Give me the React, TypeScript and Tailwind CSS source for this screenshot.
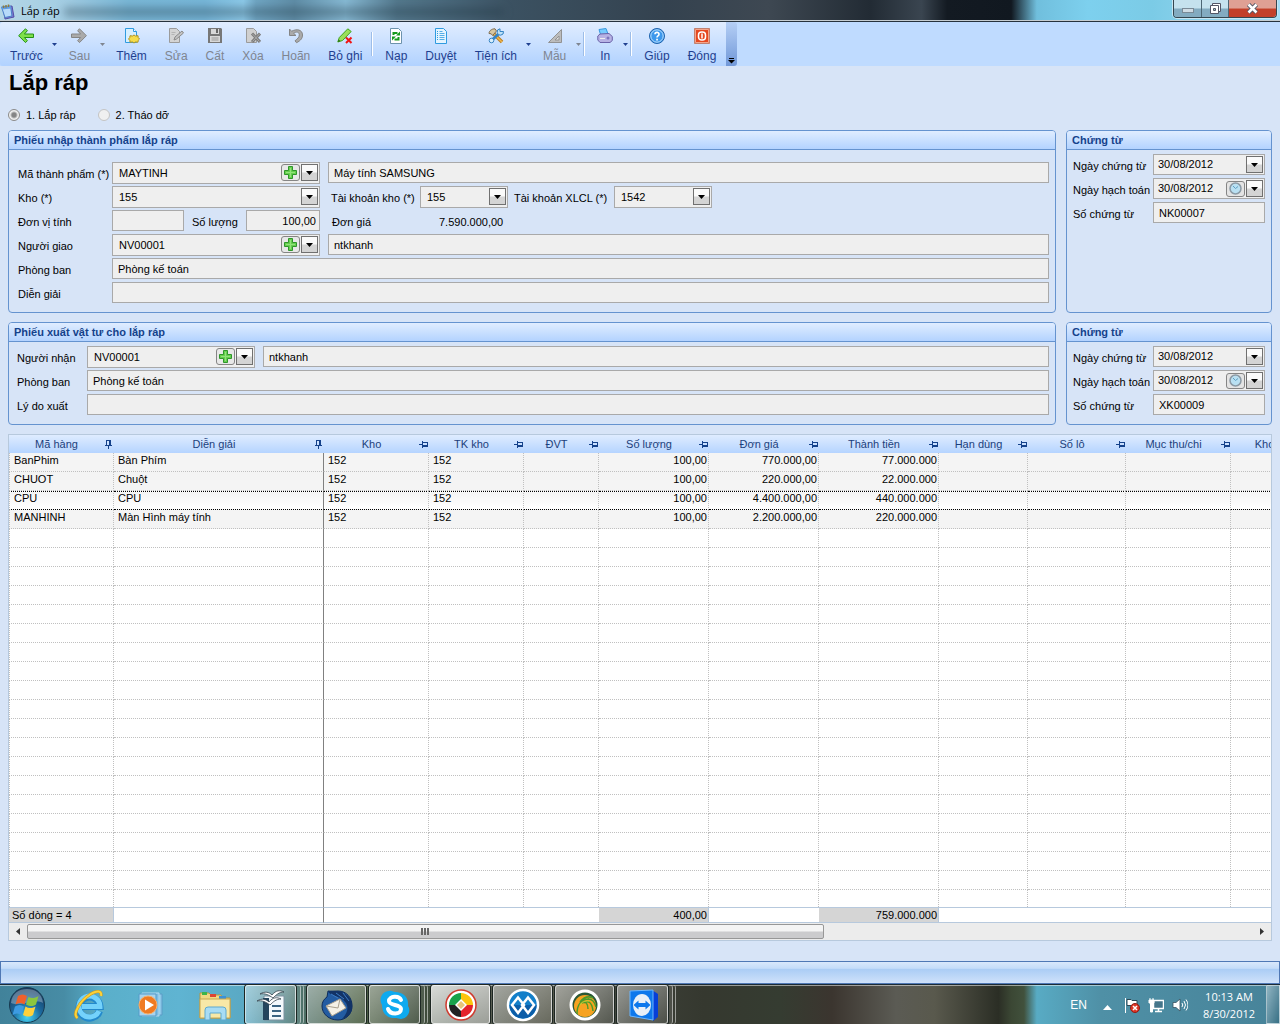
import React, { useState } from 'react';

interface Column {
  title: string;
  width: string;
  align?: 'right';
  pinned?: boolean;
}

interface ToolItem {
  label: string;
  icon: React.ReactNode;
  disabled?: boolean;
  menu?: boolean;
  separator?: boolean;
}

const columns: Column[] = [
  { title: 'Mã hàng', width: 'w-[105px]', pinned: true },
  { title: 'Diễn giải', width: 'w-[210px]', pinned: true },
  { title: 'Kho', width: 'w-[105px]' },
  { title: 'TK kho', width: 'w-[95px]' },
  { title: 'ĐVT', width: 'w-[75px]' },
  { title: 'Số lượng', width: 'w-[110px]', align: 'right' },
  { title: 'Đơn giá', width: 'w-[110px]', align: 'right' },
  { title: 'Thành tiền', width: 'w-[120px]', align: 'right' },
  { title: 'Hạn dùng', width: 'w-[89px]' },
  { title: 'Số lô', width: 'w-[98px]' },
  { title: 'Mục thu/chi', width: 'w-[105px]' },
  { title: 'Kho', width: 'w-[77px]' },
];

const rows: string[][] = [
  ['BanPhim', 'Bàn Phím', '152', '152', '', '100,00', '770.000,00', '77.000.000'],
  ['CHUOT', 'Chuột', '152', '152', '', '100,00', '220.000,00', '22.000.000'],
  ['CPU', 'CPU', '152', '152', '', '100,00', '4.400.000,00', '440.000.000'],
  ['MANHINH', 'Màn Hình máy tính', '152', '152', '', '100,00', '2.200.000,00', '220.000.000'],
];

const totals = ['Số dòng = 4', '', '', '', '', '400,00', '', '759.000.000', '', '', '', ''];

const ROW_COUNT = 24;

const Icon = ({ children, size = 16 }: { children: React.ReactNode; size?: number }) => (
  <svg width={size} height={size} viewBox={`0 0 ${size} ${size}`} fill="none" aria-hidden="true" className="shrink-0">
    {children}
  </svg>
);

const page = 'M2.5 .5h8l3 3v12h-11z';

const tools: ToolItem[] = [
  {
    label: 'Trước',
    menu: true,
    icon: <path d="M7.500 .8 .6 7.700l6.900 6.900 1.900-1.900-3-3.200H15.500V6H6.400l3-3.300z" fill="#7ee04a" stroke="#239016" strokeLinejoin="round" />,
  },
  {
    label: 'Sau',
    menu: true,
    disabled: true,
    icon: <path d="M8.500 .8l6.900 6.900-6.900 6.900-1.900-1.900 3-3.200H.5V6h9.100l-3-3.300z" fill="#aaa" stroke="#858585" strokeLinejoin="round" />,
  },
  {
    label: 'Thêm',
    icon: (
      <>
        <path d="M1.500 .5h8l3 3v11h-11z" fill="#d6efff" stroke="#2f9be0" />
        <path d="M9.500 .5v3h3" stroke="#2f9be0" fill="#fff" />
        <path d="m10 7 1.500 1 2.500-.3.200 1.800 1.300 1.500-1.300 1.300-.2 1.900-2.500-.2-1.500 1-1.500-1-2.500.2-.2-1.900L4.500 11l1.300-1.500L6 7.700l2.500.3z" fill="#f5dc4a" stroke="#ae9324" />
      </>
    ),
  },
  {
    label: 'Sửa',
    disabled: true,
    icon: (
      <>
        <path d="M1.500 .5h7l3 3v11h-10z" fill="#d4d4d4" stroke="#9b9b9b" />
        <path d="m6 12 1-3 7-6 1.500 2-7 6z" fill="#c4c4c4" stroke="#8a8a8a" />
        <path d="M3.500 4.500h4m-4 2h3" stroke="#b5b5b5" />
      </>
    ),
  },
  {
    label: 'Cất',
    disabled: true,
    icon: (
      <>
        <path d="M1 0h13l1 1v14H1z" fill="#777" />
        <path d="M4 1h8v5H4zM3 8h10v6H3z" fill="#d8d8d8" />
        <path d="M9 1h2v4H9z" fill="#666" />
        <path d="M4.500 10h7m-7 2h7" stroke="#999" />
      </>
    ),
  },
  {
    label: 'Xóa',
    disabled: true,
    icon: (
      <>
        <path d="M1.500 .5h7l3 3v11h-10z" fill="#d0d0d0" stroke="#9b9b9b" />
        <path d="m7 5.500 8 8.500m0-8.500L7 14" stroke="#7d7d7d" strokeWidth="3" />
        <path d="m7.500 6 7 7.500m0-7.500-7 7.500" stroke="#aaa" />
      </>
    ),
  },
  {
    label: 'Hoãn',
    disabled: true,
    icon: <path d="M1.500 1v6.500H8L5.600 5.300C8.500 3.200 11.300 4 11.300 6.800c0 2.300-1.600 4-4.300 6l1.500 1.900C13 12.500 14.500 10 14.500 7 14.500 1.500 8.500.5 3.600 3.300z" fill="#aaa" stroke="#858585" strokeLinejoin="round" />,
  },
  {
    label: 'Bỏ ghi',
    icon: (
      <>
        <path d="M.8 14 2.300 9.500 10.800.8l3.400 2.700L5.500 12.500z" fill="#9be05a" stroke="#3fa51e" strokeLinejoin="round" />
        <path d="m.8 14 .8-2.500 1.900 1.500z" fill="#276e12" />
        <path d="m9 9.500 5.500 5.500m0-5.500L9 15" stroke="#f01414" strokeWidth="2" />
      </>
    ),
  },
  {
    label: 'Nạp',
    separator: true,
    icon: (
      <>
        <path d={page} fill="#fff" stroke="#6d93ad" />
        <path d="M5.500 7V5h4" stroke="#159a1b" strokeWidth="2" />
        <path d="M8 7.500h4v-4zM8 8.500H4v4z" fill="#159a1b" />
        <path d="M10.500 9v2.500h-4" stroke="#159a1b" strokeWidth="2" />
      </>
    ),
  },
  {
    label: 'Duyệt',
    icon: (
      <>
        <path d={page} fill="#e4f4ff" stroke="#2f9be0" />
        <path d="M4.500 3v10" stroke="#2f9be0" strokeDasharray="1 1" />
        <path d="M6.500 3.500h3m-3 2h5m-5 2h5m-5 2h5m-5 2h5" stroke="#55aee6" />
      </>
    ),
  },
  {
    label: 'Tiện ích',
    menu: true,
    icon: (
      <>
        <path d="m5 5 9 9" stroke="#b97d20" strokeWidth="3.500" />
        <path d="m5 5 9 9" stroke="#f1b74c" strokeWidth="1.500" />
        <path d="M1 5.500C1 3 3.500.8 7 .8L8.500 3 4.700 7.500 3.200 5.800z" fill="#d8c7a0" stroke="#7c6b50" />
        <path d="m3 13 9-8.500" stroke="#3584c4" strokeWidth="3" />
        <path d="M15.500 3.500A3.200 3.200 0 1 1 12 .8v2.700h2z" fill="#bfe1f8" stroke="#3584c4" />
        <circle cx="3.500" cy="12.500" r="2.300" fill="#d9effc" stroke="#3584c4" />
      </>
    ),
  },
  {
    label: 'Mẫu',
    menu: true,
    disabled: true,
    icon: (
      <>
        <path d="M1.500 14.500h13v-13z" fill="#bcbcbc" stroke="#929292" />
        <path d="M8 12h4V8z" fill="#e4e4e4" stroke="#929292" />
      </>
    ),
  },
  {
    label: 'In',
    menu: true,
    separator: true,
    icon: (
      <>
        <path d="m2 1.500 7-1 2 5.500-7 2z" fill="#78ccff" stroke="#3799df" />
        <path d="M.8 8 3 6l9-.5 3.300 3v4L13 14.500H3L.8 12z" fill="#b7b2e4" stroke="#6a62a8" />
        <path d="M3 10.500h5" stroke="#eee" />
        <circle cx="11" cy="10" r="1.500" fill="#7d76bd" />
      </>
    ),
  },
  {
    label: 'Giúp',
    separator: true,
    icon: (
      <>
        <circle cx="8" cy="8" r="7.500" fill="#3d98ec" stroke="#1e62ac" />
        <circle cx="8" cy="8" r="6.200" stroke="#b9defc" />
        <path d="M6 6.300C6 3.700 10 3.800 10 6.200 10 8 8 7.600 8 9.500" stroke="#fff" strokeWidth="1.600" />
        <path d="M7.200 10.800h1.700v1.700H7.200z" fill="#fff" />
      </>
    ),
  },
  {
    label: 'Đóng',
    icon: (
      <>
        <path d="M.5 .5h15v15H.5z" fill="#e5471f" stroke="#c08070" />
        <path d="M1.500 1.500h13v13h-13z" stroke="#f4a48a" />
        <rect x="4.500" y="4" width="7" height="8" rx="3" stroke="#fff" strokeWidth="1.500" />
        <path d="M8 5.500v5" stroke="#fff" strokeWidth="1.500" />
      </>
    ),
  },
];

const ToolButton = ({ item }: { item: ToolItem }) => {
  const color = item.disabled ? 'text-[#7f8590]' : 'text-[#1f3f8f]';
  return (
    <>
      {item.separator && <span className="mt-2.5 mr-0.5 h-6 w-px bg-white shadow-[-1px_0_0_#9dbde8]" />}
      <button type="button" disabled={item.disabled} className={`flex flex-col items-center px-2 pt-1.5 ${color}`}>
        <Icon>{item.icon}</Icon>
        <span className="mt-1 text-xs leading-4 whitespace-nowrap">{item.label}</span>
      </button>
      {item.menu && (
        <button type="button" disabled={item.disabled} aria-label={`${item.label} menu`} className={`-ml-0.5 flex w-2 justify-center pt-5 ${color}`}>
          <svg width="5" height="3" viewBox="0 0 5 3" fill="currentColor" className="mt-px"><path d="M0 0h5L2.500 3z" /></svg>
        </button>
      )}
    </>
  );
};

const ArrowBox = () => (
  <span className="flex h-[17px] w-[17px] items-center justify-center border border-[#707070] bg-linear-to-b from-[#fafafa] from-45% to-[#d4d4d4] to-55%">
    <svg width="7" height="4" viewBox="0 0 7 4"><path d="M0 0h7L3.500 4z" fill="#000" /></svg>
  </span>
);

const PlusButton = ({ label }: { label: string }) => (
  <button type="button" aria-label={label} className="pointer-events-auto flex h-[17px] w-[19px] items-center justify-center rounded-[3px] border border-[#858585] bg-[#e8e8e8]">
    <svg width="15" height="15" viewBox="0 0 15 15">
      <path d="M5.500 1.500h4v4h4v4h-4v4h-4v-4h-4v-4h4z" fill="#66cf4e" stroke="#2f962b" />
      <path d="M7.500 3v9M3 7.500h9" stroke="#92e37b" />
    </svg>
  </button>
);

const Combo = ({ id, value, width, plus, label }: { id: string; value: string; width: string; plus?: boolean; label?: string }) => (
  <div className={`relative h-[22px] shrink-0 ${width}`}>
    <select id={id} aria-label={label} className="h-full w-full appearance-none border border-[#a9a9a9] bg-[#efefef] pr-5 pl-1.5">
      <option>{value}</option>
    </select>
    <div className="pointer-events-none absolute top-0.5 right-0.5 flex items-center gap-px">
      {plus && <PlusButton label={`Thêm ${value}`} />}
      <ArrowBox />
    </div>
  </div>
);

const TextField = ({ id, value, className = 'flex-1', label }: { id: string; value: string; className?: string; label?: string }) => (
  <input id={id} type="text" aria-label={label} defaultValue={value} className={`h-[21px] min-w-0 border border-[#a9a9a9] bg-[#efefef] px-[5px] ${className}`} />
);

const DateField = ({ id, value, clock }: { id: string; value: string; clock?: boolean }) => (
  <div className="flex h-[21px] min-w-0 flex-1 items-center gap-px border border-[#a9a9a9] bg-[#efefef] pr-px">
    <input id={id} type="text" defaultValue={value} className="min-w-0 flex-1 bg-transparent pl-1" />
    {clock && (
      <button type="button" aria-label="Giờ" className="flex h-4 w-[19px] items-center justify-center rounded-[3px] border border-[#858585] bg-[#e4e4e4]">
        <svg width="13" height="13" viewBox="0 0 13 13">
          <circle cx="6.500" cy="6.500" r="5.500" fill="#b9e0f2" stroke="#8b9aa5" strokeWidth="1.500" />
          <path d="m4 4 2.500 2.500L9 4.500" stroke="#5da0c4" fill="none" />
        </svg>
      </button>
    )}
    <button type="button" aria-label="Chọn ngày"><ArrowBox /></button>
  </div>
);

const Label = ({ htmlFor, width, children }: { htmlFor: string; width: string; children: React.ReactNode }) => (
  <label htmlFor={htmlFor} className={`shrink-0 leading-6 whitespace-nowrap ${width}`}>{children}</label>
);

const Row = ({ children }: { children: React.ReactNode }) => <div className="flex h-6 items-start">{children}</div>;

const Panel = ({ title, className, body, children }: { title: string; className: string; body: string; children: React.ReactNode }) => (
  <section className={`rounded-[4px] border border-[#6593cf] ${className}`}>
    <h2 className="h-[19px] rounded-t-[3px] border-b border-[#6593cf] bg-linear-to-b from-[#e0edff] to-[#b3d3ff] pl-[5px] leading-[18px] font-bold text-[#15428b]">{title}</h2>
    <div className={body}>{children}</div>
  </section>
);

const VoucherPanel = ({ prefix, number }: { prefix: string; number: string }) => (
  <Panel title="Chứng từ" className="w-[206px] shrink-0" body="px-1.5 pt-1 pb-1.5">
    <Row>
      <Label htmlFor={`${prefix}-date`} width="w-20">Ngày chứng từ</Label>
      <DateField id={`${prefix}-date`} value="30/08/2012" />
    </Row>
    <Row>
      <Label htmlFor={`${prefix}-posted`} width="w-20">Ngày hạch toán</Label>
      <DateField id={`${prefix}-posted`} value="30/08/2012" clock />
    </Row>
    <Row>
      <Label htmlFor={`${prefix}-number`} width="w-20">Số chứng từ</Label>
      <TextField id={`${prefix}-number`} value={number} />
    </Row>
  </Panel>
);

const Pin = ({ pinned }: { pinned?: boolean }) => (
  <svg width="9" height="9" viewBox="0 0 9 9" fill="none" stroke="#15428b" shapeRendering="crispEdges" className="shrink-0">
    {pinned ? <path d="M2.500 6V.5h4V6M1 5.500h7M4.500 6v3M5.500 1v5" /> : <path d="M3 2.500h5.500v4H3M3.500 1v7M0 4.500h3M3 5.500h5" />}
  </svg>
);

const ItemsTable = () => {
  const [selected, setSelected] = useState(2);

  return (
    <div className="overflow-hidden border border-[#b7c9dd] bg-white">
      <table className="w-[1299px] table-fixed border-separate border-spacing-0">
        <colgroup>
          {columns.map((col, i) => <col key={i} className={col.width} />)}
        </colgroup>
        <thead>
          <tr>
            {columns.map((col, i) => (
              <th key={i} className="h-[18px] bg-linear-to-b from-[#dfecff] to-[#b5d4ff] p-0 font-normal text-[#1c3f7c]">
                <div className="flex items-center pr-px">
                  <span className="flex-1 text-center leading-[18px] whitespace-nowrap">{col.title}</span>
                  <Pin pinned={col.pinned} />
                </div>
              </th>
            ))}
          </tr>
        </thead>
        <tbody>
          {Array.from({ length: ROW_COUNT }, (_, r) => {
            const row = rows[r];
            const last = r === ROW_COUNT - 1;
            const active = r === selected;
            return (
              <tr key={r} onClick={() => row && setSelected(r)} className={row && !active ? 'bg-[#f4f4f4]' : 'bg-white'}>
                {columns.map((col, c) => (
                  <td
                    key={c}
                    className={`border-r p-0 pr-px pl-1 align-top whitespace-nowrap ${last ? 'h-[17px]' : 'h-[19px] border-b'} ${c === 0 ? 'border-l' : ''} ${c === 1 ? 'border-r-[#808080] [border-right-style:solid]' : 'border-r-[#c0c0c0] [border-right-style:dotted]'} ${active ? 'border-t border-y-black bg-linear-to-b from-[#f4f4f4] to-white leading-3 [border-block-style:dotted]' : 'border-b-[#c0c0c0] leading-[14px] [border-bottom-style:dotted]'} border-l-[#c0c0c0] [border-left-style:dotted] ${col.align === 'right' ? 'text-right' : ''}`}
                  >
                    {row?.[c]}
                  </td>
                ))}
              </tr>
            );
          })}
        </tbody>
        <tfoot>
          <tr>
            {totals.map((total, i) => (
              <td key={i} className={`h-4 border-y border-y-[#b7c9dd] p-0 leading-[14px] ${i === 1 ? 'border-r border-r-[#808080]' : ''} ${total ? 'border-r border-r-[#b7c9dd] bg-[#d5d5d5]' : ''} ${i === 0 ? 'pl-[3px]' : 'pr-px text-right'}`}>
                {total}
              </td>
            ))}
          </tr>
        </tfoot>
      </table>
      <div className="flex h-[17px] bg-[#ececec]">
        <button type="button" aria-label="Cuộn trái" className="flex w-[18px] items-center justify-center">
          <svg width="4" height="7" viewBox="0 0 4 7"><path d="M4 0v7L0 3.500z" fill="#333" /></svg>
        </button>
        <div className="flex-1 py-px">
          <div className="flex h-[15px] w-[65%] items-center justify-center gap-px rounded-[2px] border border-[#979797] bg-linear-to-b from-[#f4f4f4] from-45% to-[#cbcbcd] to-55%">
            <span className="h-[7px] w-0.5 bg-[#666]" />
            <span className="h-[7px] w-0.5 bg-[#666]" />
            <span className="h-[7px] w-0.5 bg-[#666]" />
          </div>
        </div>
        <button type="button" aria-label="Cuộn phải" className="flex w-[18px] items-center justify-center">
          <svg width="4" height="7" viewBox="0 0 4 7"><path d="M0 0v7l4-3.500z" fill="#333" /></svg>
        </button>
      </div>
    </div>
  );
};

const TitleBar = () => (
  <header className="relative flex h-[22px] items-start overflow-hidden border-b border-[#26323d]">
    <div className="absolute inset-0 bg-[linear-gradient(90deg,#b4d6e6_0%,#a3cde3_5%,#79b7d6_10%,#76b6d8_16%,#8cc9e8_19%,#6fa5c2_20%,#5f8da6_23%,#86b9d3_27%,#53788c_31%,#3b5161_40%,#34424f_52%,#3e4852_60%,#222b34_68%,#3a4550_72%,#131a22_74%,#111820_79%,#70bfdd_81%,#7dd0ee_85%,#7bcbe6_90%,#a4ddf6_100%)]" />
    <div className="absolute top-2 left-16 h-2 w-[440px] bg-[#203444]/40 blur-xs" />
    <div className="absolute inset-x-0 bottom-0 h-px bg-[#c5cdd2]" />
    <div className="relative flex flex-1 items-center gap-1 pt-0.5">
      <Icon size={17}>
        <path d="m3 4 9-1 2 11-9 2z" fill="#7e7bd0" stroke="#524fa8" />
        <path d="m1.500 4 9-1 1.500 10-7 1.500z" fill="#b7dafa" stroke="#4a80c8" />
        <path d="m1.500 4 9-1 .4 2.500-9 1z" fill="#5f9de3" />
        <path d="M3.500 5V2.500m2.500 2V2m2.500 2V1.500" stroke="#8d7c3c" strokeWidth="1.500" />
      </Icon>
      <span className="font-['Open_Sans',sans-serif] text-[11px] leading-[18px]">Lắp ráp</span>
    </div>
    <div className="relative mr-[3px] flex h-[18px] overflow-hidden rounded-b-[4px] border border-t-0 border-[#35464f] shadow-[0_0_0_1px_#c8e6f2]">
      <button type="button" aria-label="Minimize" className="flex w-7 items-center justify-center border-r border-[#4d6775] bg-linear-to-b from-[#c5e2ee] from-45% to-[#83abc0] to-55%">
        <span className="mt-1 h-[5px] w-3 border border-[#7a8a96] bg-[#cfdce4]" />
      </button>
      <button type="button" aria-label="Restore" className="flex w-[27px] items-center justify-center border-r border-[#4d6775] bg-linear-to-b from-[#c5e2ee] from-45% to-[#83abc0] to-55%">
        <svg width="13" height="13" viewBox="0 0 13 13"><path d="M3.500 1.500h8v8h-8z" fill="#fff" stroke="#535666" /><path d="M1.500 3.500h8v8h-8z" fill="#fff" stroke="#535666" /><path d="M4.500 6.500h2v2h-2z" fill="#9cc" stroke="#535666" /></svg>
      </button>
      <button type="button" aria-label="Close" className="flex w-[47px] items-center justify-center bg-linear-to-b from-[#dfa094] from-45% to-[#c2402a] to-55%">
        <svg width="13" height="11" viewBox="0 0 13 11"><path d="m2.500 1.500 8 8m0-8-8 8" stroke="#535666" strokeWidth="4.500" /><path d="m2.500 1.500 8 8m0-8-8 8" stroke="#fff" strokeWidth="2.500" /></svg>
      </button>
    </div>
  </header>
);

const TaskButton = ({ label, stacked, active, children }: { label: string; stacked?: boolean; active?: boolean; children: React.ReactNode }) => (
  <div className="flex w-[59px]">
    <button type="button" aria-label={label} className={`flex flex-1 items-center justify-center rounded-[3px] border border-white/60 bg-linear-to-br shadow-[0_0_0_1px_#1c2622] ${active ? 'from-white/80 to-white/40' : 'from-white/45 to-white/10'}`}>
      <svg width="34" height="34" viewBox="0 0 34 34" fill="none">{children}</svg>
    </button>
    {stacked && (
      <>
        <span className="ml-px w-1 rounded-r-[3px] border-r border-white/50 bg-white/10" />
        <span className="w-[3px] rounded-r-[3px] border-r border-white/50" />
      </>
    )}
  </div>
);

const Taskbar = () => (
  <footer className="flex h-10 items-stretch border-t border-[#1b2b36] bg-[linear-gradient(90deg,#41829a_0%,#478ca5_5%,#5aafca_8%,#5fb4d2_14%,#5aa9c4_19%,#4d6d62_24%,#4c6044_28%,#3c4a39_33%,#595e53_38%,#57594c_43%,#3d4139_49%,#35382f_55%,#353c31_61%,#3b352f_65%,#5b5b54_70%,#59594d_73%,#2b2e25_78%,#3b4734_79%,#41513c_80%,#58abc4_81%,#4f90a6_86%,#478399_100%)] shadow-[inset_0_1px_0_#ffffff80]">
    <div className="flex flex-1 items-stretch">
      <div className="flex w-[245px] items-center">
        <button type="button" aria-label="Start" className="ml-2">
          <svg width="38" height="38" viewBox="0 0 38 38" fill="none">
            <defs>
              <radialGradient id="orb" cx=".5" cy=".85" r=".8"><stop stopColor="#45d5f4" /><stop offset=".5" stopColor="#1c6ba0" /><stop offset="1" stopColor="#173b60" /></radialGradient>
            </defs>
            <circle cx="19" cy="19" r="17.500" fill="url(#orb)" stroke="#173a50" />
            <path d="M3 17C4 7 11 3 19 3s15 4 16 14C27 12 12 21 3 17z" fill="#fff" opacity=".3" />
            <path d="M10 10c3-2 6-2 9 0l-2.500 8.500c-3-2-6-2-9 0z" fill="#f1602b" />
            <path d="M20.500 11c3 1.500 6 1.500 10-1L28 18.500c-3 2-6 2-10 0z" fill="#8cc63e" />
            <path d="M7 20.500c3-2 6-2 9 0L13.500 29c-3-2-6-2-9 0z" fill="#3d9be2" />
            <path d="M17.500 20.500c3 2 6 2 10 0L25 29c-3 2-6 2-10 0z" fill="#ffd13b" />
          </svg>
        </button>
        <button type="button" aria-label="Internet Explorer" className="ml-[26px]">
          <svg width="34" height="34" viewBox="0 0 34 34" fill="none">
            <path d="M27.500 23A10.500 10.500 0 1 1 28 18.500H10" stroke="#2389cc" strokeWidth="7" />
            <path d="M27 23A10.500 10.500 0 1 1 28 18.500H10" stroke="#74d2fb" strokeWidth="5" />
            <path d="M5.500 30C0 26 8 13 18 6.500 25 2 30 2.500 29 8" stroke="#d69a14" strokeWidth="3" />
            <path d="M5.500 30C0 26 8 13 18 6.500 25 2 30 2.500 29 8" stroke="#fbd23a" strokeWidth="2" />
          </svg>
        </button>
        <button type="button" aria-label="Windows Media Player" className="ml-7">
          <svg width="34" height="34" viewBox="0 0 34 34" fill="none">
            <path d="M11 6h17v21H11z" fill="#8dc7e8" stroke="#5b9bc5" />
            <path d="M8 5h17v23H8z" fill="#7dbce2" stroke="#b2dcf2" />
            <path d="M5 6h17v22H5z" fill="#a8d4ee" stroke="#559bc8" />
            <circle cx="14" cy="17" r="9" fill="#f07b22" stroke="#f9b06a" />
            <path d="M11 11.500v11l9-5.500z" fill="#fff" />
          </svg>
        </button>
        <button type="button" aria-label="Windows Explorer" className="ml-[30px]">
          <svg width="34" height="34" viewBox="0 0 34 34" fill="none">
            <path d="M2 5h9l2 2h10l2 3h7v20H2z" fill="#f0d983" stroke="#b8963e" />
            <path d="M4 4h5v3H4z" fill="#3cb54a" /><path d="M12 6h6v3h-6z" fill="#dc4432" /><path d="M21 8h7v3h-7z" fill="#3b91d6" />
            <path d="M2 11h30v19H2z" fill="#f8e8a7" stroke="#c8a64f" />
            <path d="M7 32V22q0-3 3-3h15q3 0 3 3v10h-5v-7H12v7z" fill="#a8dcf4" stroke="#5ea9d0" />
          </svg>
        </button>
      </div>
      <div className="flex gap-[3px]">
        <TaskButton label="Writer" stacked>
          <path d="M10 8h20v24H10z" fill="#f4f9fc" stroke="#7c919f" /><path d="M9 10h6v22H9z" fill="#24455d" />
          <path d="M18 18h9m-9 5h9m-9 5h9" stroke="#3b6482" strokeWidth="2" />
          <path d="M6 6c5-3 9-2 12 1 4-5 8-5 12-3-5 0-8 3-11 6-4-3-8-5-13-4z" fill="#fff" stroke="#33424c" strokeWidth=".8" />
          <path d="M3 13c5-3 9-2 12 1 4-5 8-5 12-3-5 0-8 3-11 6-4-3-8-5-13-4z" fill="#fff" stroke="#33424c" strokeWidth=".8" />
        </TaskButton>
        <TaskButton label="Thunderbird">
          <path d="M8 3c3 1 6 0 10 0 9 0 14 7 14 15 0 8-6 14-14 14C9 32 2 26 2 18c0-4 2-7 5-9z" fill="#235ca2" stroke="#0e2c5c" />
          <path d="M8 3c2 6 13 4 18 12 3 5 1 11-4 16 8-2 11-8 10-15C30 6 22 2 8 3z" fill="#123366" />
          <path d="m11 6 7 4m-2-5 8 6m-1-6 6 8" stroke="#3d7cc4" />
          <path d="m6 18 14-7 6 9-14 8z" fill="#f5f1e6" stroke="#a9a08e" /><path d="m6 18 12 2 2-9" stroke="#a9a08e" />
        </TaskButton>
        <TaskButton label="Skype" stacked>
          <path d="M11 3c2-1 5 1 6 1 9 0 14 6 13 14 3 4 1 12-7 13-2 0-3-1-5-1C9 31 4 25 4 17 0 10 5 3 11 3z" fill="#0eaaf0" />
          <path d="M23 12c-2-5-12-4-12 1s12 3 12 8c0 6-11 6-13 0" stroke="#fff" strokeWidth="4" strokeLinecap="round" />
        </TaskButton>
        <TaskButton label="MISA" active>
          <circle cx="17" cy="17" r="15" fill="#fff" stroke="#cf3a2e" strokeWidth="1.500" />
          <path d="M17 5A12 12 0 0 0 5 17h12z" fill="#18a24a" /><path d="M17 5a12 12 0 0 1 12 12H17z" fill="#fdc50d" />
          <path d="M29 17a12 12 0 0 1-12 12V17z" fill="#e4232b" /><path d="M17 29A12 12 0 0 1 5 17h12z" fill="#222" />
          <path d="m17 11 6 6-6 6-6-6z" fill="#fff" /><path d="m17 13 4 4-4 4-4-4z" fill="#e5c57d" />
        </TaskButton>
        <TaskButton label="Mimosa">
          <circle cx="17" cy="17" r="15" fill="#137fc9" stroke="#fff" strokeWidth="2.500" />
          <path d="M3.500 17h27a13.500 13.500 0 0 1-27 0z" fill="#0b5da8" />
          <path d="m12 9.500 6 7.500-6 8-6-8zm10 0 6 7.500-6 8-6-8z" stroke="#fff" strokeWidth="2.500" />
        </TaskButton>
        <TaskButton label="Bamboo">
          <circle cx="17" cy="17" r="14" fill="#2b5836" stroke="#fff" strokeWidth="3" />
          <circle cx="17" cy="18" r="11" fill="#f6a321" />
          <path d="M9 26c0-9 4-15 12-15m-9 3c4-5 9-6 13-4m-9 5c4-3 8-1 9 8m-5-12c5 0 7 4 8 8m-14-4c4-2 6 1 6 6" stroke="#4c9b2b" strokeWidth="1.500" />
          <path d="M12 17c3-4 6-4 9-4" stroke="#b4d537" />
        </TaskButton>
        <TaskButton label="TeamViewer" stacked>
          <path d="m26 2 6 4v23l-5 4z" fill="#063fd8" /><path d="m4 3 23-1v30L4 28z" fill="#0d78ec" stroke="#6bb6ff" />
          <ellipse cx="16" cy="17" rx="9" ry="11" fill="#e8f0f8" />
          <path d="m7.500 17 5-4.500V15h7v-2.500l5 4.500-5 4.500V19h-7v2.500z" fill="#0d78ec" />
        </TaskButton>
      </div>
    </div>
    <div className="flex items-center font-['Open_Sans',sans-serif] text-[11px] text-white">
      <span className="mr-4 font-['Liberation_Sans',sans-serif] text-xs">EN</span>
      <button type="button" aria-label="Show hidden icons" className="mr-3 pt-1.5"><svg width="9" height="5" viewBox="0 0 9 5"><path d="M4.500 0 9 5H0z" fill="#fff" /></svg></button>
      <div className="mr-1 flex gap-2">
        <Icon>
          <path d="M1.500 1v15M3 2.500h4l1 1h5v6H8l-1-1H3z" fill="#fff" stroke="#2c4856" /><path d="M1.500 1v15" stroke="#fff" />
          <circle cx="11" cy="11" r="4.500" fill="#df3526" stroke="#8f1c14" /><path d="m9 9 4 4m0-4-4 4" stroke="#fff" strokeWidth="1.500" />
        </Icon>
        <Icon>
          <path d="M5.500 3.500h10v8h-10z" fill="#45758a" stroke="#fff" strokeWidth="1.500" /><path d="M7 14.500h7M10.500 12v3" stroke="#fff" strokeWidth="1.500" />
          <path d="M1 3h5v3H4.500v9h-2V6H1zM2 1v2m3-2v2" fill="#fff" stroke="#fff" />
        </Icon>
        <Icon>
          <path d="M1 5.500h3L8 2v12l-4-3.500H1z" fill="#fff" stroke="#38515e" strokeWidth=".8" /><path d="M10 6q1.500 2 0 4m2-6q3 4 0 8m2-9.500q4 5.500 0 11" stroke="#fff" />
        </Icon>
      </div>
      <div className="w-[74px] text-center leading-[17px]">
        <div>10:13 AM</div>
        <div>8/30/2012</div>
      </div>
      <button type="button" aria-label="Show desktop" className="h-full w-3.5 border border-white/50 bg-linear-to-br from-white/40 to-[#2d6579]/60" />
    </div>
  </footer>
);

const App = () => {
  const [mode, setMode] = useState('assemble');

  return (
    <div className="flex min-h-screen flex-col bg-[#d7e4f7] font-['Liberation_Sans',sans-serif] text-[11px] text-black">
      <TitleBar />
      <nav className="flex h-11 bg-[#bfdbff]">
        <div className="flex items-start gap-0.5 rounded-l-[3px] bg-linear-to-b from-[#e1edff] to-[#b1d2ff] px-0.5">
          {tools.map(item => <ToolButton key={item.label} item={item} />)}
        </div>
        <button type="button" aria-label="Tùy chọn" className="flex w-[11px] items-end justify-center rounded-r-[3px] bg-linear-to-b from-[#b5cff5] to-[#7198d8] pb-0.5">
          <svg width="7" height="7" viewBox="0 0 7 7"><path d="M1 1.500h5" stroke="#000" /><path d="M0 3h7L3.500 6.500z" fill="#000" /></svg>
        </button>
      </nav>

      <main className="flex flex-1 flex-col px-2 pb-5">
        <h1 className="h-[34px] pl-px text-[22px] leading-[34px] font-bold">Lắp ráp</h1>
        <div className="flex h-[30px] items-center gap-[22px]">
          {[['assemble', '1. Lắp ráp'], ['disassemble', '2. Tháo dỡ']].map(([value, text]) => (
            <label key={value} className="flex items-center gap-1.5">
              <input
                type="radio"
                name="mode"
                value={value}
                checked={mode === value}
                onChange={() => setMode(value)}
                className="h-3 w-3 appearance-none rounded-full border border-[#c4c4c4] bg-[#f0f0f0] checked:border-[#8a8a8a] checked:bg-[radial-gradient(circle,#858585_2px,#f0f0f0_4px)]"
              />
              {text}
            </label>
          ))}
        </div>

        <div className="flex flex-col gap-[9px]">
          <div className="flex gap-2.5">
            <Panel title="Phiếu nhập thành phẩm lắp ráp" className="min-w-0 flex-1" body="pt-3 pr-1.5 pb-1.5 pl-[9px]">
              <Row>
                <Label htmlFor="product" width="w-[94px]">Mã thành phẩm (*)</Label>
                <Combo id="product" value="MAYTINH" width="mr-2 w-52" plus />
                <TextField id="product-name" label="Tên thành phẩm" value="Máy tính SAMSUNG" />
              </Row>
              <Row>
                <Label htmlFor="stock" width="w-[94px]">Kho (*)</Label>
                <Combo id="stock" value="155" width="mr-[11px] w-52" />
                <Label htmlFor="stock-account" width="w-[89px]">Tài khoản kho (*)</Label>
                <Combo id="stock-account" value="155" width="mr-1.5 w-[88px]" />
                <Label htmlFor="xlcl-account" width="w-[100px]">Tài khoản XLCL (*)</Label>
                <Combo id="xlcl-account" value="1542" width="w-[98px]" />
              </Row>
              <Row>
                <Label htmlFor="unit" width="w-[94px]">Đơn vị tính</Label>
                <TextField id="unit" value="" className="w-[72px]" />
                <Label htmlFor="quantity" width="ml-2 w-[54px]">Số lượng</Label>
                <TextField id="quantity" value="100,00" className="w-[74px] pr-[3px] text-right" />
                <span className="ml-3 w-[107px] leading-6">Đơn giá</span>
                <output className="leading-6">7.590.000,00</output>
              </Row>
              <Row>
                <Label htmlFor="deliverer" width="w-[94px]">Người giao</Label>
                <Combo id="deliverer" value="NV00001" width="mr-2 w-52" plus />
                <TextField id="deliverer-name" label="Tên người giao" value="ntkhanh" />
              </Row>
              <Row>
                <Label htmlFor="in-department" width="w-[94px]">Phòng ban</Label>
                <TextField id="in-department" value="Phòng kế toán" />
              </Row>
              <Row>
                <Label htmlFor="description" width="w-[94px]">Diễn giải</Label>
                <TextField id="description" value="" />
              </Row>
            </Panel>
            <VoucherPanel prefix="in" number="NK00007" />
          </div>

          <div className="flex gap-2.5">
            <Panel title="Phiếu xuất vật tư cho lắp ráp" className="min-w-0 flex-1" body="pt-1 pr-1.5 pb-1.5 pl-2">
              <Row>
                <Label htmlFor="receiver" width="w-[70px]">Người nhận</Label>
                <Combo id="receiver" value="NV00001" width="mr-2 w-[168px]" plus />
                <TextField id="receiver-name" label="Tên người nhận" value="ntkhanh" />
              </Row>
              <Row>
                <Label htmlFor="out-department" width="w-[70px]">Phòng ban</Label>
                <TextField id="out-department" value="Phòng kế toán" />
              </Row>
              <Row>
                <Label htmlFor="reason" width="w-[70px]">Lý do xuất</Label>
                <TextField id="reason" value="" />
              </Row>
            </Panel>
            <VoucherPanel prefix="out" number="XK00009" />
          </div>

          <ItemsTable />
        </div>
      </main>

      <div className="h-[23px] border border-[#4f78b5] bg-[linear-gradient(180deg,#d9e8fb_0%,#c4dcf9_30%,#abcdf5_35%,#cfe1fa_100%)]" />
      <Taskbar />
    </div>
  );
};

export default App;
